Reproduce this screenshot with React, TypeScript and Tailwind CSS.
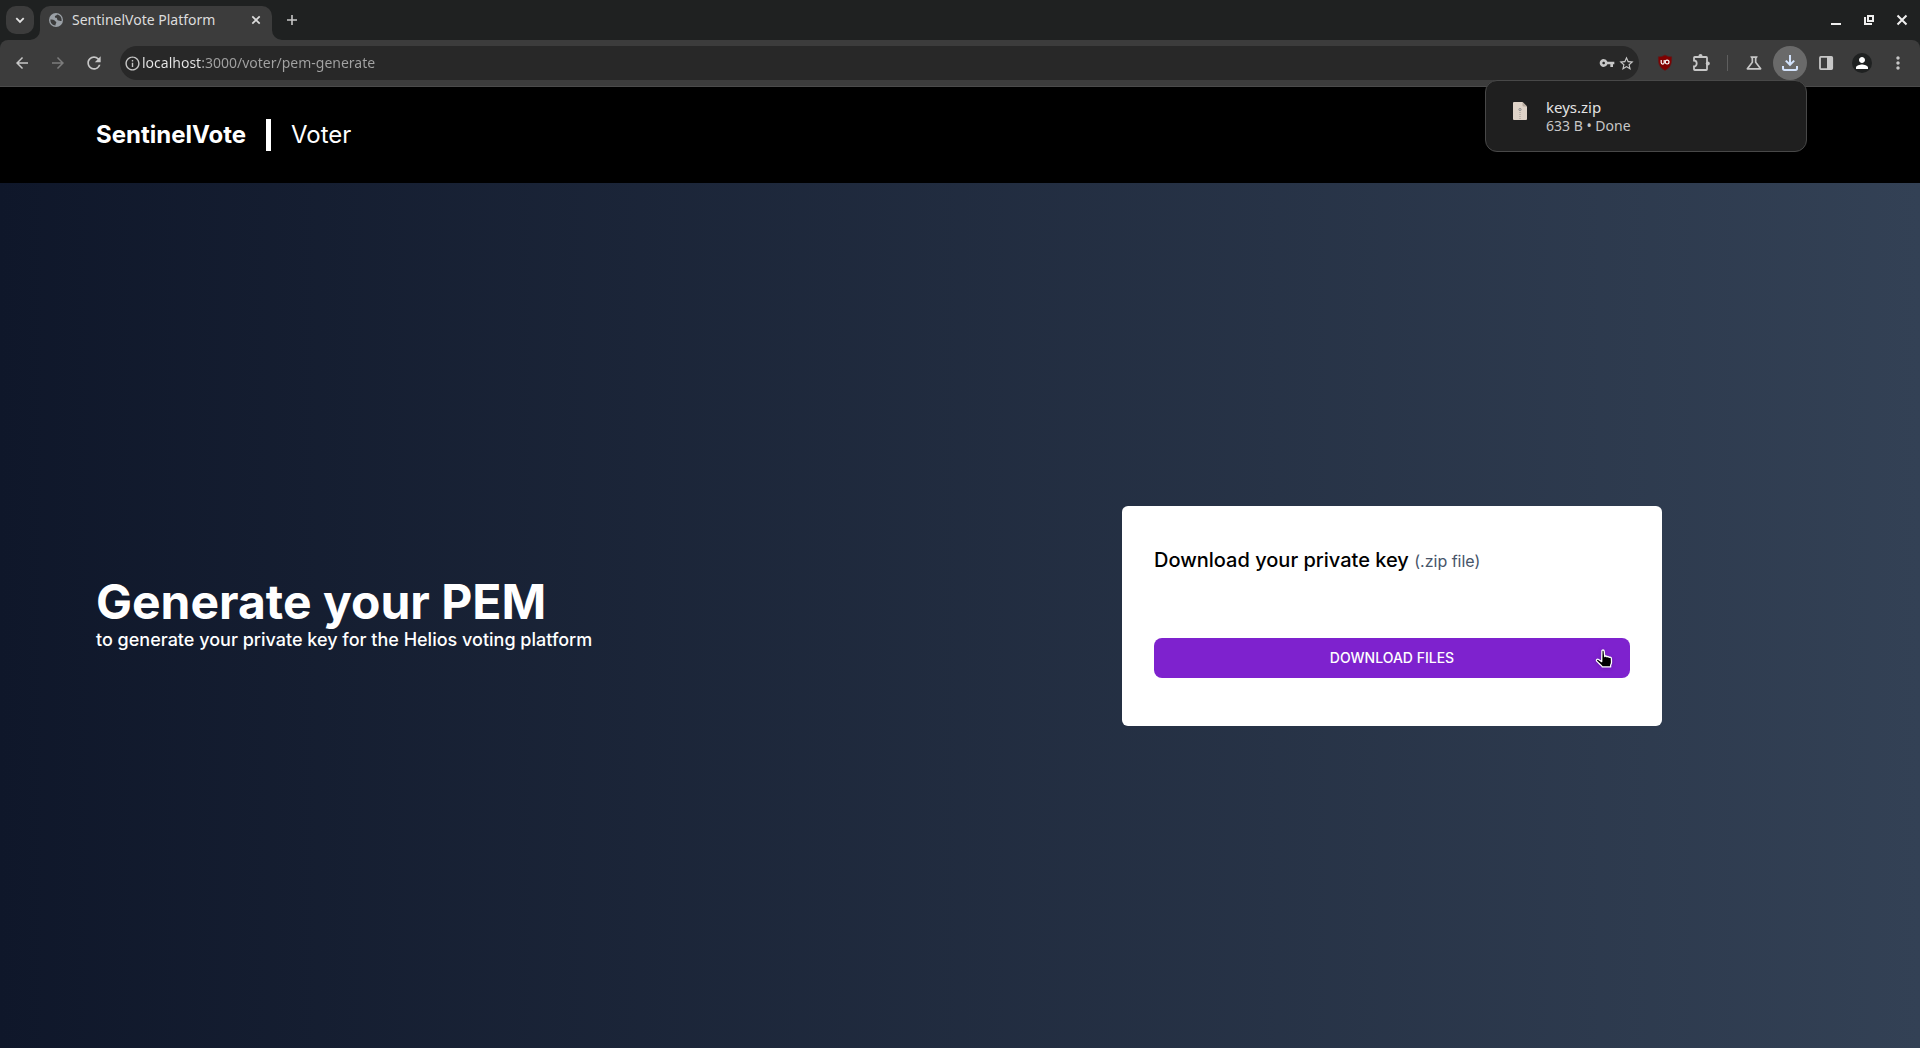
import React from "react";
import { MdArrowBack, MdArrowForward, MdInfoOutline, MdMoreVert, MdOutlineScience, MdPerson, MdRefresh, MdStarOutline, MdVpnKey } from "react-icons/md";

const toolButton = "flex h-[34px] w-[34px] shrink-0 items-center justify-center rounded-full text-[#c7c7c7]";

function GlobeIcon() {
  return (
    <svg className="shrink-0" width="16" height="16" viewBox="0 0 16 16">
      <circle cx="8" cy="8" r="7" fill="#9aa0a6" />
      <path d="M2.4 7.4c2 0 3.8.2 4.2 1.2.3 1 1.8.7 1.7 2-.1 1-.9 1.2-.8 2.8C4.5 13.3 2.2 11 2.4 7.4ZM9 2.5c-.2 1.2-2.2 1-2.2 2.2 0 1.2 1.6.7 2.1 1.5.5 1 .2 2.2 1.5 2.2 1.2 0 1.4.9 3.2.6C14 5.5 12 2.8 9 2.5Z" fill="#3c3c3c" />
    </svg>
  );
}

function PuzzleIcon() {
  return (
    <svg width="20" height="20" viewBox="0 0 20 20">
      <path d="M3 7.5V4.8q0-.8.8-.8h11.4q.8 0 .8.8v11.4q0 .8-.8.8H3.800q-.8 0-.8-.8v-2.700a2.700 3 0 0 0 0-6Z" fill="none" stroke="currentColor" strokeWidth="1.8" />
      <circle cx="9.5" cy="3" r="2" fill="currentColor" />
      <circle cx="16.8" cy="10.5" r="2" fill="currentColor" />
    </svg>
  );
}

function ShieldIcon() {
  return (
    <svg width="16" height="18" viewBox="0 0 16 18">
      <path d="M8 1c2 1.300 4 1.800 6.700 1.800 0 6.200-.2 10.200-6.700 13.700C1.500 13 1.300 9 1.300 2.800 4 2.800 6 2.300 8 1Z" fill="#800000" stroke="#5a1c1c" strokeWidth=".6" />
      <path d="M4.200 6v2.600a1.500 1.500 0 0 0 3 0V6" fill="none" stroke="#fff" strokeWidth="1.200" />
      <circle cx="10.100" cy="8.100" r="1.900" fill="none" stroke="#fff" strokeWidth="1.200" />
    </svg>
  );
}

function DownloadIcon() {
  return (
    <svg width="20" height="20" viewBox="0 0 20 20" fill="none" stroke="#d3e3fd" strokeWidth="2">
      <path d="M10 2v9.500M5.800 7.600l4.200 4.200 4.200-4.200M3 13v2.300q0 1.700 1.500 1.700h11q1.500 0 1.500-1.700V13" />
    </svg>
  );
}

function SidePanelIcon() {
  return (
    <svg width="16" height="16" viewBox="0 0 16 16">
      <rect x="2" y="1.900" width="12.200" height="12.200" rx=".8" fill="none" stroke="currentColor" strokeWidth="1.800" />
      <path d="M9 2h5v12H9Z" fill="currentColor" />
    </svg>
  );
}

function ZipFileIcon() {
  return (
    <svg className="mt-1 shrink-0" width="14" height="18" viewBox="0 0 14 18">
      <path d="M1 0h8.500L14 4.500V17q0 1-1 1H1q-1 0-1-1V1q0-1 1-1Z" fill="#dfd3c8" />
      <path d="M9.500 0 14 4.500h-3.500q-1 0-1-1Z" fill="#b9aca0" />
      <circle cx="7" cy="7.500" r="1.100" fill="none" stroke="#8f8f8f" />
      <path d="M7 10v7" stroke="#b8aea5" strokeDasharray="1 1" strokeWidth="1.500" />
    </svg>
  );
}

function PointerHand() {
  return (
    <svg className="pointer-events-none absolute top-[11px] right-4 drop-shadow-sm" width="19" height="21" viewBox="0 0 19 21">
      <path d="M6.900 2.200c0-1.600 2.200-1.600 2.300 0l.5 5.300c.7-.8 1.900-.6 2.200.3.800-.6 1.900-.3 2.200.6 1.100-.6 2.300 0 2.300 1.400l.1 3.400c0 1.300-.4 2-.9 3v1.700H7.300c-.2-.9-1-1.300-1.900-2.200l-3.700-3.600c-.9-1.200.6-2.400 1.800-1.600l3.200 2.100Z" fill="#000" stroke="#fff" strokeWidth="1.300" strokeLinejoin="round" />
    </svg>
  );
}

function BrowserTabs() {
  return (
    <div className="flex h-10 items-end">
      <button aria-label="Search tabs" className="mb-1.5 ml-1.5 flex h-7 w-7 items-center justify-center rounded-[10px] bg-[#3c3c3c] text-[#e3e3e3]">
        <svg width="12" height="12" viewBox="0 0 12 12" fill="none" stroke="currentColor" strokeWidth="1.800"><path d="M2.300 4.200 6 7.900l3.700-3.700" /></svg>
      </button>
      <svg className="-ml-1 shrink-0 text-[#3c3c3c]" width="10" height="10" fill="currentColor"><path d="M10 0v10H0A10 10 0 0 0 10 0Z" /></svg>
      <div className="flex h-[34px] w-[232px] shrink-0 items-center rounded-t-[10px] bg-[#3c3c3c] pb-1.5 pl-2">
        <GlobeIcon />
        <span className="ml-2 pb-px text-[14px] text-[#dcdcdc]">SentinelVote Platform</span>
        <button aria-label="Close tab" className="mr-2 ml-auto flex h-4 w-4 items-center justify-center text-[#dcdcdc]">
          <svg width="10" height="10" viewBox="0 0 10 10" stroke="currentColor" strokeWidth="1.700"><path d="m1.300 1.300 7.400 7.400m0-7.400L1.300 8.700" /></svg>
        </button>
      </div>
      <svg className="shrink-0 text-[#3c3c3c]" width="10" height="10" fill="currentColor"><path d="M0 0v10h10A10 10 0 0 1 0 0Z" /></svg>
      <button aria-label="New tab" className="mb-1.5 flex h-7 w-5 items-center justify-center text-[#c7c7c7]">
        <svg width="12" height="12" viewBox="0 0 12 12" stroke="currentColor" strokeWidth="1.600"><path d="M6 1v10M1 6h10" /></svg>
      </button>
      <div className="mr-2 ml-auto flex h-10 items-center gap-[13px] text-[#efefef]">
        <button aria-label="Minimize" className="flex h-5 w-5 items-center justify-center">
          <svg width="12" height="12" viewBox="0 0 12 12" fill="currentColor"><path d="M1 9h10v2H1Z" /></svg>
        </button>
        <button aria-label="Restore" className="flex h-5 w-5 items-center justify-center">
          <svg width="12" height="12" viewBox="0 0 12 12" fill="none" stroke="currentColor" strokeWidth="2"><path d="M5 2h5v5H5ZM2 3v7h7" /></svg>
        </button>
        <button aria-label="Close window" className="flex h-5 w-5 items-center justify-center">
          <svg width="12" height="12" viewBox="0 0 12 12" stroke="currentColor" strokeWidth="2"><path d="m1.500 1.500 9 9m0-9-9 9" /></svg>
        </button>
      </div>
    </div>
  );
}

function DownloadBubble() {
  return (
    <div className="absolute top-full right-0 z-10 flex h-[72px] w-[322px] rounded-xl border border-[#484848] bg-[#1f1f1f] px-[27px] pt-[17px]">
      <ZipFileIcon />
      <div className="ml-[19px] text-left">
        <p className="text-[15px] leading-[18px] text-[#e3e3e3]">keys.zip</p>
        <p className="text-[14px] leading-5 text-[#c7c7c7]">633 B • Done</p>
      </div>
    </div>
  );
}

function BrowserToolbar() {
  return (
    <div className="flex items-center gap-0.5 rounded-t-lg border-b border-[#4b4b4b] bg-[#3c3c3c] px-[5px] py-1.5">
      <button aria-label="Back" className={toolButton}><MdArrowBack size={18} /></button>
      <button aria-label="Forward" className="flex h-[34px] w-[34px] items-center justify-center text-[#7c7c7c]"><MdArrowForward size={18} /></button>
      <button aria-label="Reload" className={toolButton}><MdRefresh size={20} /></button>
      <div className="mx-[7px] flex h-[34px] min-w-0 flex-1 items-center rounded-full bg-[#282828] pr-1 pl-1 text-[#c7c7c7]">
        <button aria-label="Site information" className="shrink-0"><MdInfoOutline size={17} /></button>
        <input
          aria-label="Address"
          defaultValue="localhost:3000/voter/pem-generate"
          className="ml-px min-w-0 flex-1 bg-[linear-gradient(90deg,#e8e8e8_60px,#a3a3a3_60px)] bg-clip-text pb-px text-[14px] text-transparent outline-none"
        />
        <button aria-label="Passwords" className="mr-[3px] shrink-0"><MdVpnKey size={16} /></button>
        <button aria-label="Bookmark" className="shrink-0"><MdStarOutline size={17} /></button>
      </div>
      <button aria-label="Content blocker" className={toolButton}><ShieldIcon /></button>
      <button aria-label="Extensions" className={toolButton}><PuzzleIcon /></button>
      <div className="mx-[7px] h-4 w-px shrink-0 bg-[#5f5f5f]" />
      <button aria-label="Experiments" className={toolButton}><MdOutlineScience size={20} /></button>
      <div className="relative">
        <button aria-label="Downloads" className="flex h-[34px] w-[34px] items-center justify-center rounded-full bg-[#6a6a6a]"><DownloadIcon /></button>
        <DownloadBubble />
      </div>
      <button aria-label="Side panel" className={toolButton}><SidePanelIcon /></button>
      <button aria-label="Profile" className={toolButton}>
        <span className="flex h-5 w-5 items-center justify-center rounded-full bg-[#1f2121] text-white"><MdPerson size={18} /></span>
      </button>
      <button aria-label="Menu" className={toolButton}><MdMoreVert size={20} /></button>
    </div>
  );
}

export default function App() {
  return (
    <div className="flex min-h-screen flex-col font-['Inter',sans-serif]">
      <div className="bg-[#1f2121] font-['Noto_Sans',sans-serif]">
        <BrowserTabs />
        <BrowserToolbar />
      </div>
      <header className="flex h-24 items-center gap-5 bg-black px-24 text-2xl text-white">
        <span className="font-bold">SentinelVote</span>
        <span className="h-8 w-[5px] bg-white" />
        <span>Voter</span>
      </header>
      <main className="grid flex-1 grid-cols-2 items-center bg-linear-to-r/srgb from-[#0f172a] to-[#334155] px-24">
        <div className="text-white">
          <h1 className="text-5xl leading-none font-bold">Generate your PEM</h1>
          <p className="text-lg font-medium">to generate your private key for the Helios voting platform</p>
        </div>
        <section className="w-full max-w-[540px] justify-self-center rounded-md bg-white px-8 pt-10 pb-12">
          <h2 className="text-xl font-medium text-black">
            Download your private key <span className="text-base font-normal text-[#475569]">(.zip file)</span>
          </h2>
          <div className="relative mt-16">
            <button className="h-10 w-full rounded-lg bg-[#7e22ce] text-sm font-medium text-white">DOWNLOAD FILES</button>
            <PointerHand />
          </div>
        </section>
      </main>
    </div>
  );
}
